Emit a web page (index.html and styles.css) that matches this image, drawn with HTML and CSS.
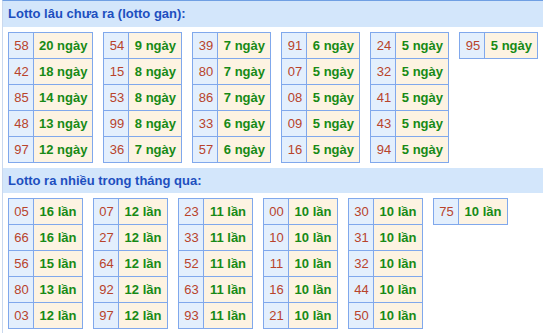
FILE: index.html
```html
<!DOCTYPE html>
<html lang="vi">
<head>
<meta charset="utf-8">
<title>Lotto</title>
<link rel="stylesheet" href="styles.css">
</head>
<body>
<div class="box">
  <div class="head first">Lotto lâu chưa ra (lotto gan):</div>
  <div class="tables gan">
    <table class="lt"><tr><td class="n">58</td><td class="v">20 ngày</td></tr><tr><td class="n">42</td><td class="v">18 ngày</td></tr><tr><td class="n">85</td><td class="v">14 ngày</td></tr><tr><td class="n">48</td><td class="v">13 ngày</td></tr><tr><td class="n">97</td><td class="v">12 ngày</td></tr></table>
    <table class="lt"><tr><td class="n">54</td><td class="v">9 ngày</td></tr><tr><td class="n">15</td><td class="v">8 ngày</td></tr><tr><td class="n">53</td><td class="v">8 ngày</td></tr><tr><td class="n">99</td><td class="v">8 ngày</td></tr><tr><td class="n">36</td><td class="v">7 ngày</td></tr></table>
    <table class="lt"><tr><td class="n">39</td><td class="v">7 ngày</td></tr><tr><td class="n">80</td><td class="v">7 ngày</td></tr><tr><td class="n">86</td><td class="v">7 ngày</td></tr><tr><td class="n">33</td><td class="v">6 ngày</td></tr><tr><td class="n">57</td><td class="v">6 ngày</td></tr></table>
    <table class="lt"><tr><td class="n">91</td><td class="v">6 ngày</td></tr><tr><td class="n">07</td><td class="v">5 ngày</td></tr><tr><td class="n">08</td><td class="v">5 ngày</td></tr><tr><td class="n">09</td><td class="v">5 ngày</td></tr><tr><td class="n">16</td><td class="v">5 ngày</td></tr></table>
    <table class="lt"><tr><td class="n">24</td><td class="v">5 ngày</td></tr><tr><td class="n">32</td><td class="v">5 ngày</td></tr><tr><td class="n">41</td><td class="v">5 ngày</td></tr><tr><td class="n">43</td><td class="v">5 ngày</td></tr><tr><td class="n">94</td><td class="v">5 ngày</td></tr></table>
    <table class="lt"><tr><td class="n">95</td><td class="v">5 ngày</td></tr></table>
  </div>
  <div class="head">Lotto ra nhiều trong tháng qua:</div>
  <div class="tables nhieu">
    <table class="lt"><tr><td class="n">05</td><td class="v">16 lần</td></tr><tr><td class="n">66</td><td class="v">16 lần</td></tr><tr><td class="n">56</td><td class="v">15 lần</td></tr><tr><td class="n">80</td><td class="v">13 lần</td></tr><tr><td class="n">03</td><td class="v">12 lần</td></tr></table>
    <table class="lt"><tr><td class="n">07</td><td class="v">12 lần</td></tr><tr><td class="n">27</td><td class="v">12 lần</td></tr><tr><td class="n">64</td><td class="v">12 lần</td></tr><tr><td class="n">92</td><td class="v">12 lần</td></tr><tr><td class="n">97</td><td class="v">12 lần</td></tr></table>
    <table class="lt"><tr><td class="n">23</td><td class="v">11 lần</td></tr><tr><td class="n">33</td><td class="v">11 lần</td></tr><tr><td class="n">52</td><td class="v">11 lần</td></tr><tr><td class="n">63</td><td class="v">11 lần</td></tr><tr><td class="n">93</td><td class="v">11 lần</td></tr></table>
    <table class="lt"><tr><td class="n">00</td><td class="v">10 lần</td></tr><tr><td class="n">10</td><td class="v">10 lần</td></tr><tr><td class="n">11</td><td class="v">10 lần</td></tr><tr><td class="n">16</td><td class="v">10 lần</td></tr><tr><td class="n">21</td><td class="v">10 lần</td></tr></table>
    <table class="lt"><tr><td class="n">30</td><td class="v">10 lần</td></tr><tr><td class="n">31</td><td class="v">10 lần</td></tr><tr><td class="n">32</td><td class="v">10 lần</td></tr><tr><td class="n">44</td><td class="v">10 lần</td></tr><tr><td class="n">50</td><td class="v">10 lần</td></tr></table>
    <table class="lt"><tr><td class="n">75</td><td class="v">10 lần</td></tr></table>
  </div>
</div>
</body>
</html>
```
FILE: styles.css
```css
html, body {
  margin: 0;
  padding: 0;
  background: #ffffff;
}
body {
  font-family: "Liberation Sans", Arial, sans-serif;
  font-size: 13px;
}
.box {
  margin-left: 2px;
  border-left: 1px solid #c9d8ee;
  border-top: 1px solid #6f9fe3;
  padding-bottom: 4px;
}
.head {
  background: #d3e6fb;
  color: #1d4fbf;
  font-weight: bold;
  font-size: 13px;
  height: 25px;
  line-height: 25px;
  padding-left: 5px;
  margin-top: 5px;
}
.head.first {
  margin-top: 0;
  height: 26px;
  line-height: 25px;
}
.tables {
  display: flex;
  align-items: flex-start;
  gap: 10px;
  padding-left: 5px;
  margin-top: 5px;
}
.lt {
  border-collapse: collapse;
  border: 1px solid #80a8ec;
  font-size: 13px;
}
.lt td {
  border: 1px solid #80a8ec;
  height: 25px;
  padding: 0 5px;
  white-space: nowrap;
  text-align: center;
}
.lt td.n {
  width: 15px;
  padding: 0 4px 0 5px;
  background: #e3effd;
  color: #b8432b;
}
.lt td.v {
  background: #fdf3e2;
  color: #178a16;
  font-weight: bold;
}
.gan .lt td.v {
  width: 42px;
}
.nhieu .lt td.v {
  width: 38px;
}
```
